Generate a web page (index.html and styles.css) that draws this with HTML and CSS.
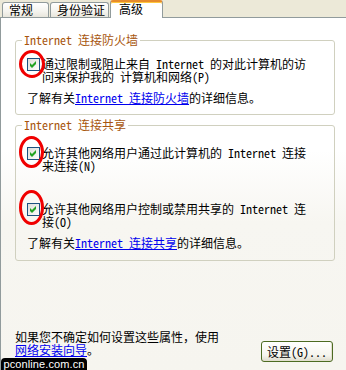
FILE: index.html
```html
<!DOCTYPE html>
<html lang="zh-CN">
<head>
<meta charset="utf-8">
<title>高级</title>
<link rel="stylesheet" href="styles.css">
</head>
<body>
<div class="window">
  <div class="tabs">
    <div class="tab tab-general">常规</div>
    <div class="tab tab-auth">身份验证</div>
    <div class="tab tab-active">高级</div>
  </div>
  <div class="panel">
    <fieldset class="group group-fw">
      <legend>Internet 连接防火墙</legend>
      <div class="opt">
        <span class="cb-wrap">
          <svg class="cb" width="13" height="13" viewBox="0 0 13 13"><defs><linearGradient id="cbg1" x1="0" y1="0" x2="1" y2="1"><stop offset="0" stop-color="#DCDCD7"/><stop offset="1" stop-color="#FFFFFF"/></linearGradient></defs><rect x="0.5" y="0.5" width="12" height="12" fill="url(#cbg1)" stroke="#1C5180"/><polygon points="3,5 5,7 9,3 9,6 5,10 3,8" fill="#21A121"/></svg>
          <svg class="ring ring-1" width="26" height="28" viewBox="0 0 26 28"><ellipse cx="13" cy="14" rx="11.5" ry="12.5" fill="none" stroke="#F00000" stroke-width="3"/></svg>
        </span>
        <span class="opt-text">通过限制或阻止来自 Internet 的对此计算机的访<br>问来保护我的 计算机和网络(P)</span>
      </div>
      <p class="info">了解有关<a class="link" href="#">Internet 连接防火墙</a>的详细信息。</p>
    </fieldset>

    <fieldset class="group group-share">
      <legend>Internet 连接共享</legend>
      <div class="opt">
        <span class="cb-wrap">
          <svg class="cb" width="13" height="13" viewBox="0 0 13 13"><defs><linearGradient id="cbg2" x1="0" y1="0" x2="1" y2="1"><stop offset="0" stop-color="#DCDCD7"/><stop offset="1" stop-color="#FFFFFF"/></linearGradient></defs><rect x="0.5" y="0.5" width="12" height="12" fill="url(#cbg2)" stroke="#1C5180"/><polygon points="3,5 5,7 9,3 9,6 5,10 3,8" fill="#21A121"/></svg>
          <svg class="ring ring-2" width="25" height="32" viewBox="0 0 25 32"><ellipse cx="12.5" cy="16" rx="11" ry="14.5" fill="none" stroke="#F00000" stroke-width="3"/></svg>
        </span>
        <span class="opt-text">允许其他网络用户通过此计算机的 Internet 连接<br>来连接(N)</span>
      </div>
      <div class="opt opt-second">
        <span class="cb-wrap">
          <svg class="cb" width="13" height="13" viewBox="0 0 13 13"><defs><linearGradient id="cbg3" x1="0" y1="0" x2="1" y2="1"><stop offset="0" stop-color="#DCDCD7"/><stop offset="1" stop-color="#FFFFFF"/></linearGradient></defs><rect x="0.5" y="0.5" width="12" height="12" fill="url(#cbg3)" stroke="#1C5180"/><polygon points="3,5 5,7 9,3 9,6 5,10 3,8" fill="#21A121"/></svg>
          <svg class="ring ring-3" width="25" height="35" viewBox="0 0 25 35"><ellipse cx="12.5" cy="17.5" rx="11" ry="16" fill="none" stroke="#F00000" stroke-width="3"/></svg>
        </span>
        <span class="opt-text">允许其他网络用户控制或禁用共享的 Internet 连<br>接(O)</span>
      </div>
      <p class="info">了解有关<a class="link" href="#">Internet 连接共享</a>的详细信息。</p>
    </fieldset>

    <div class="footer">
      <p class="hint">如果您不确定如何设置这些属性，使用<br><a class="link" href="#">网络安装向导</a>。</p>
      <button class="btn" type="button">设置(G)...</button>
    </div>
  </div>
  <div class="watermark">pconline.com.cn</div>
</div>
</body>
</html>
```
FILE: styles.css
```css
* { box-sizing: border-box; }
html, body { margin: 0; padding: 0; }
body {
  width: 346px;
  height: 370px;
  overflow: hidden;
  background: #ECE9D8;
  font-family: "Noto Sans Mono CJK SC", "Noto Sans CJK SC", monospace;
  font-size: 12px;
  color: #000;
}
.window {
  position: relative;
  height: 370px;
  display: flex;
  flex-direction: column;
}
.tabs {
  display: flex;
  align-items: flex-end;
  height: 17px;
  padding-left: 2px;
  gap: 1px;
  position: relative;
  z-index: 2;
}
.tab {
  height: 15px;
  border: 1px solid #919B9C;
  border-bottom: none;
  border-radius: 3px 3px 0 0;
  background: linear-gradient(#FFFFFF, #F4F3EE 60%, #E8E6DC);
  line-height: 12px;
  padding-top: 1px;
  text-align: left;
  white-space: nowrap;
}
.tab-general { width: 47px; padding-left: 6px; }
.tab-auth { width: 59px; padding-left: 6px; }
.tab-active {
  width: 53px;
  height: 18px;
  margin-bottom: -1px;
  background: #FFFFFF;
  border-top: 2px solid #E68B2C;
  box-shadow: inset 0 1px 0 #FFC73C;
  padding-top: 0;
  padding-left: 8px;
  line-height: 13px;
}
.panel {
  flex: 1;
  border-top: 1px solid #919B9C;
  border-left: 1px solid #919B9C;
  background: linear-gradient(#FFFFFF 0, #FFFFFF 132px, #F7F6F1 205px, #F6F5EF 100%);
  display: flex;
  flex-direction: column;
}
.group {
  margin: 0 11px 0 14px;
  border: 1px solid #D0D0BF;
  border-radius: 3px;
  padding: 0 11px 10px 11px;
  min-width: 0;
}
.group legend {
  color: #A8560E;
  padding: 0 2px;
  margin-left: -5px;
  line-height: 14px;
}
.group-fw { margin-top: 15px; }
.group-share { margin-top: 3px; padding-bottom: 11px; }
.opt {
  display: flex;
  align-items: flex-start;
  gap: 1px;
  margin-top: 10px;
}
.group-share .opt { margin-top: 14px; }
.group-share .opt-second { margin-top: 30px; }
.cb-wrap {
  position: relative;
  width: 13px;
  height: 13px;
  flex: none;
  margin-top: 1px;
}
.cb { display: block; }
.ring {
  position: absolute;
  left: -8px;
  pointer-events: none;
}
.ring-1 { top: -8px; }
.ring-2 { top: -11px; }
.ring-3 { top: -13px; }
.opt-text {
  line-height: 13px;
  padding-left: 1px;
}
.info {
  margin: 8px 0 0 0;
  line-height: 13px;
}
.link {
  color: #0000EE;
  text-decoration: underline;
}
.footer {
  display: flex;
  justify-content: space-between;
  align-items: flex-start;
  margin-top: 69px;
  padding: 0 13px 0 14px;
}
.hint {
  margin: 0;
  line-height: 13px;
}
.btn {
  width: 72px;
  height: 21px;
  margin-top: 11px;
  border: 1px solid #4D6B22;
  border-radius: 3px;
  background: linear-gradient(#FFFFFF, #F6F5EE 70%, #DEDCCD);
  box-shadow: inset -1px -1px 0 #E2DFCF;
  font-family: inherit;
  font-size: 12px;
  line-height: 13px;
  color: #000;
  padding: 0;
}
.watermark {
  position: absolute;
  left: 1px;
  bottom: -3px;
  width: 86px;
  height: 15px;
  background: #000;
  border-radius: 4px;
  color: #FFFFFF;
  font-family: "Liberation Sans", Arial, sans-serif;
  font-size: 11px;
  line-height: 13px;
  text-align: center;
  letter-spacing: 0.1px;
}
```
